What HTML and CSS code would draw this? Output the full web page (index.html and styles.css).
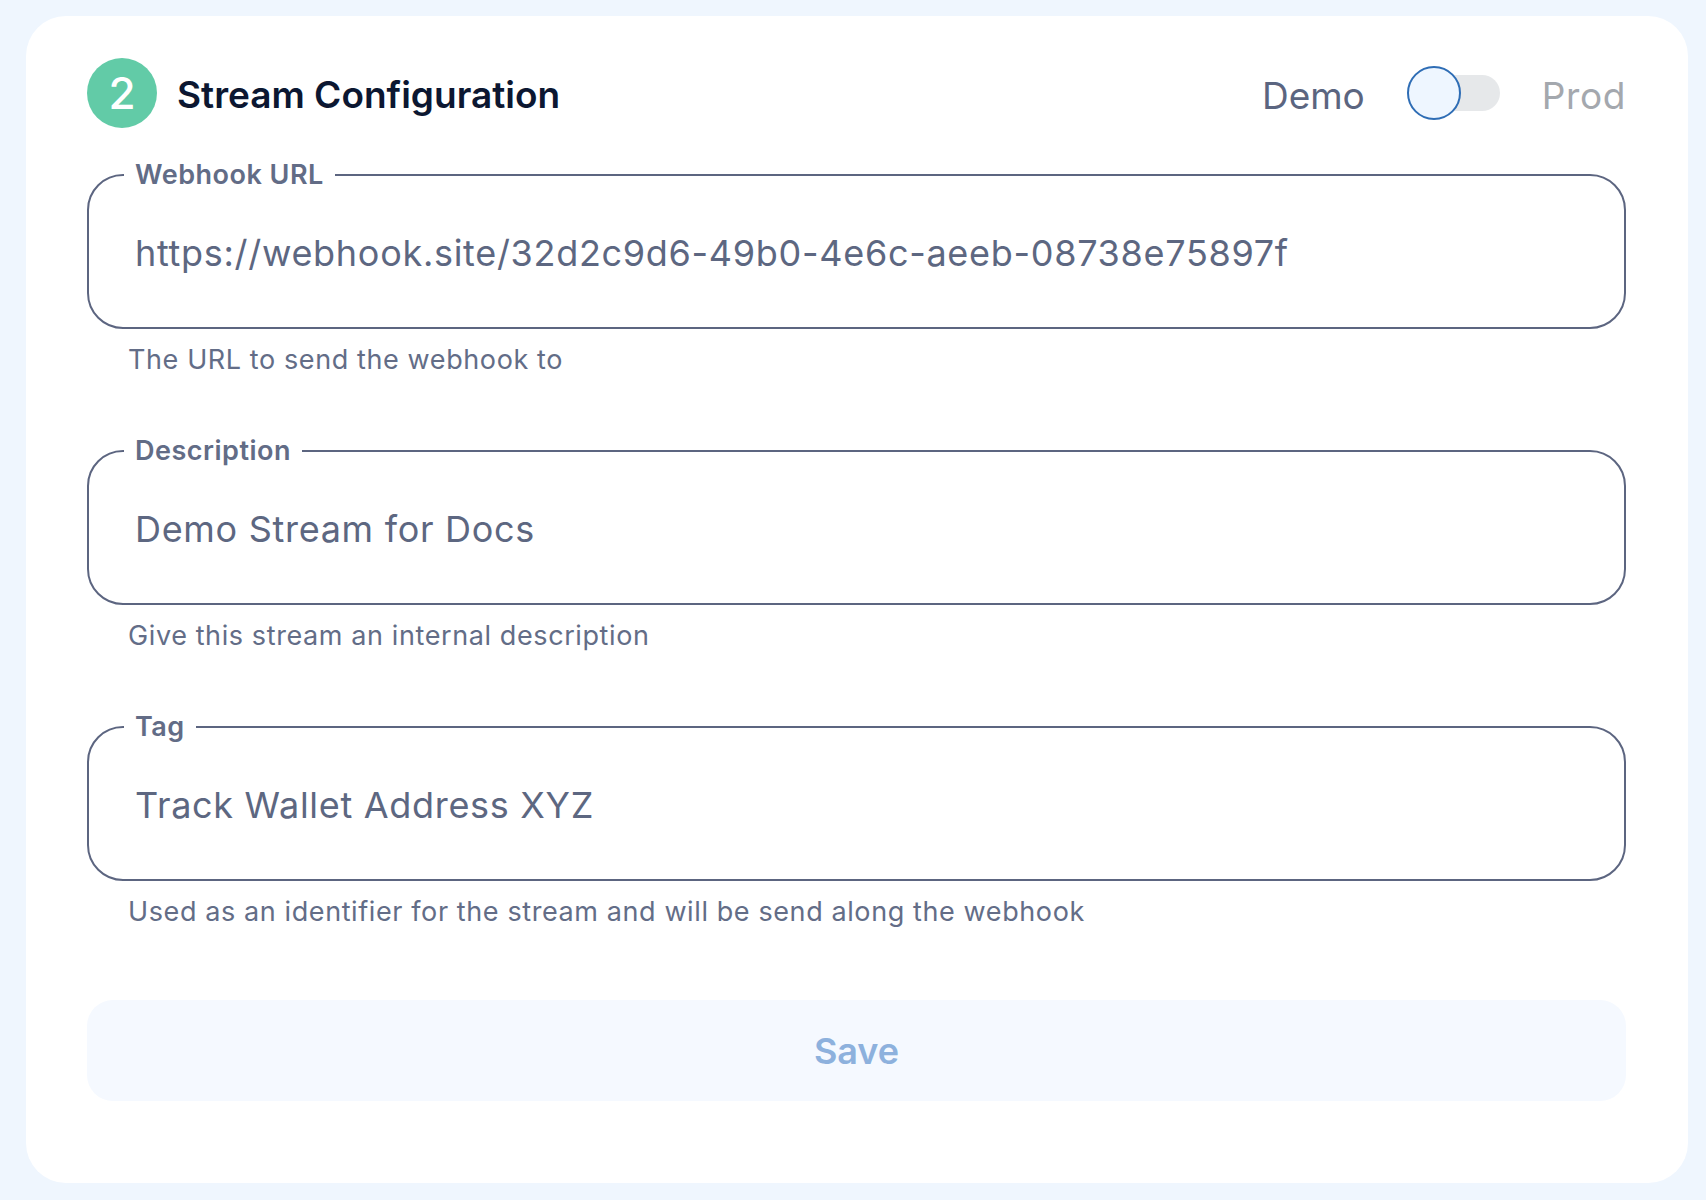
FILE: index.html
```html
<!DOCTYPE html>
<html lang="en">
<head>
<meta charset="utf-8">
<title>Stream Configuration</title>
<link rel="stylesheet" href="styles.css">
</head>
<body>
<div class="card">
  <div class="header">
    <div class="title-group">
      <div class="step">2</div>
      <h1 class="title">Stream Configuration</h1>
    </div>
    <div class="env">
      <span class="env-label env-active">Demo</span>
      <span class="switch"><span class="track"></span><span class="thumb"></span></span>
      <span class="env-label env-inactive">Prod</span>
    </div>
  </div>

  <div class="field">
    <fieldset class="box">
      <legend class="legend">Webhook URL</legend>
      <div class="value">https://webhook.site/32d2c9d6-49b0-4e6c-aeeb-08738e75897f</div>
    </fieldset>
    <p class="helper">The URL to send the webhook to</p>
  </div>

  <div class="field">
    <fieldset class="box">
      <legend class="legend">Description</legend>
      <div class="value">Demo Stream for Docs</div>
    </fieldset>
    <p class="helper">Give this stream an internal description</p>
  </div>

  <div class="field">
    <fieldset class="box">
      <legend class="legend">Tag</legend>
      <div class="value">Track Wallet Address XYZ</div>
    </fieldset>
    <p class="helper">Used as an identifier for the stream and will be send along the webhook</p>
  </div>

  <button class="save" type="button">Save</button>
</div>
</body>
</html>
```

FILE: styles.css
```css
* { box-sizing: border-box; }

html, body {
  margin: 0;
  padding: 0;
}

body {
  background: #eff6fe;
  font-family: Inter, "Noto Sans", "Liberation Sans", sans-serif;
  height: 1200px;
  overflow: hidden;
}

.card {
  margin: 16px 18px 0 26px;
  height: 1167px;
  background: #ffffff;
  border-radius: 40px;
  padding: 42px 62px 0 61px;
}

.header {
  display: flex;
  align-items: center;
  justify-content: space-between;
  height: 70px;
}

.title-group {
  display: flex;
  align-items: center;
  gap: 20px;
}

.step {
  width: 70px;
  height: 70px;
  border-radius: 50%;
  background: #62cba7;
  color: #ffffff;
  font-size: 44px;
  font-weight: 500;
  display: flex;
  align-items: center;
  justify-content: center;
}

.title {
  margin: 0;
  padding-top: 3px;
  font-size: 37px;
  font-weight: 600;
  color: #0c1731;
}

.env {
  display: flex;
  align-items: center;
  gap: 42px;
}

.env-label {
  padding-top: 4px;
  font-size: 37px;
  font-weight: 400;
}

.env-active { color: #5b6580; }
.env-inactive { color: #a4a8ae; letter-spacing: 0.6px; }

.switch {
  position: relative;
  width: 93px;
  height: 54px;
  display: block;
}

.track {
  position: absolute;
  left: 3px;
  top: 9px;
  width: 90px;
  height: 36px;
  border-radius: 18px;
  background: #e6e8ea;
}

.thumb {
  position: absolute;
  left: 0;
  top: 0;
  width: 54px;
  height: 54px;
  border-radius: 50%;
  background: #eef6ff;
  border: 2.5px solid #2e6db5;
}

.field {
  margin-top: 31px;
}

.field + .field {
  margin-top: 57px;
}

.box {
  margin: 0;
  min-width: 0;
  border: 2px solid #5c6580;
  border-radius: 36px;
  padding: 0 46px;
}

.legend {
  margin-left: -11px;
  padding: 0 11px;
  font-size: 27px;
  line-height: 32px;
  font-weight: 600;
  letter-spacing: 0.5px;
  color: #626c86;
}

.value {
  padding: 40px 0 52px;
  font-size: 36px;
  line-height: 44px;
  letter-spacing: 0.7px;
  color: #5d6781;
  white-space: nowrap;
}

.helper {
  margin: 13px 0 0 41px;
  font-size: 27px;
  line-height: 36px;
  letter-spacing: 0.6px;
  color: #636d87;
}

.save {
  display: block;
  width: 100%;
  height: 101px;
  margin-top: 70px;
  border: none;
  border-radius: 26px;
  background: #f5f9ff;
  color: #8db1dd;
  font-family: inherit;
  font-size: 36px;
  font-weight: 600;
  cursor: default;
}
```
